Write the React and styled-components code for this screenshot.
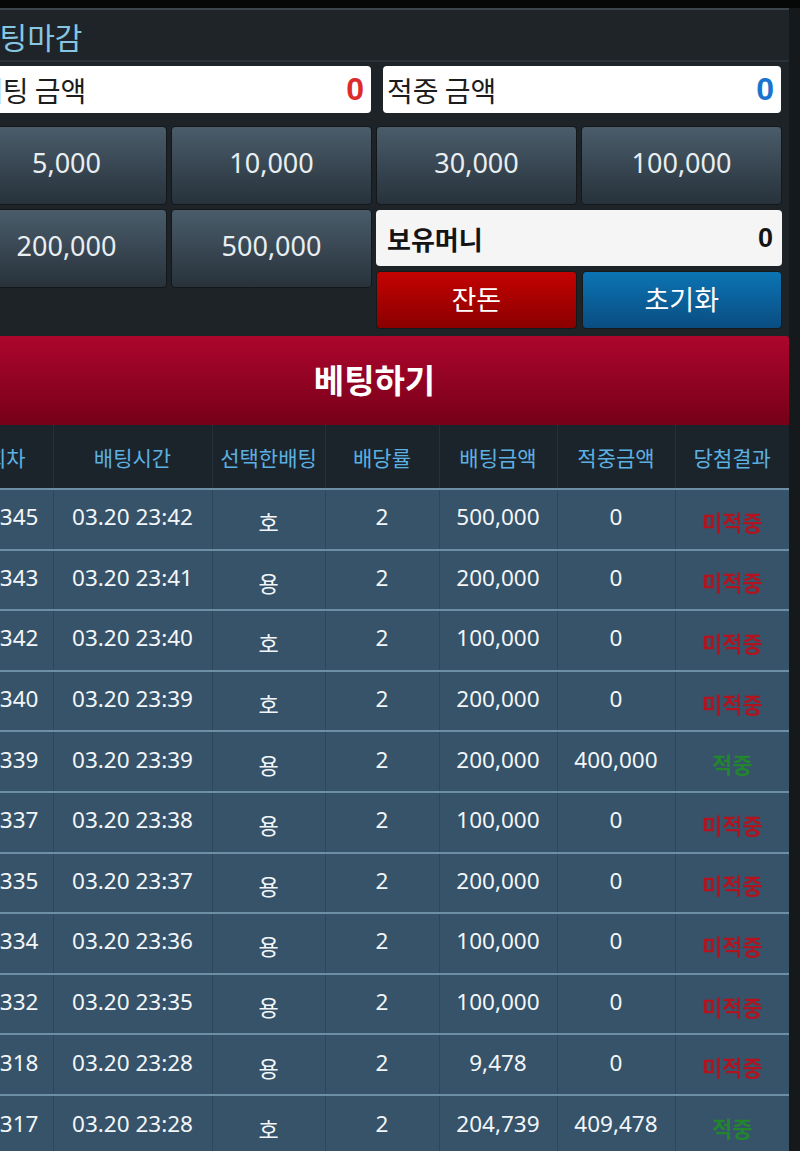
import React from "react";
import styled, { createGlobalStyle } from "styled-components";

const GlobalStyle = createGlobalStyle`
  html, body {
    margin: 0;
    padding: 0;
    background: #15191b;
    overflow: hidden;
  }
  body {
    font-family: "Noto Sans", "Noto Sans CJK KR", sans-serif;
  }
`;

const Page = styled.div`
  width: 800px;
  height: 1151px;
  overflow: hidden;
  background: #15191b;
`;

const TopBar = styled.div`
  height: 8px;
  background: #060707;
`;

const Panel = styled.div`
  width: 829px;
  margin-left: -40px;
  background: #1d2327;
  border-top: 2px solid #3a454c;
`;

const TitleBar = styled.div`
  height: 52px;
  display: flex;
  align-items: center;
  padding: 2px 0 0 12px;
  box-sizing: border-box;
  background: #1e2428;
  border-bottom: 2px solid #283137;
  color: #86c6e2;
  font-family: "Noto Sans CJK KR", sans-serif;
  font-size: 30px;
`;

const Controls = styled.div`
  padding: 4px 7px 7px 6px;
`;

const AmountRow = styled.div`
  display: grid;
  grid-template-columns: 1fr 1fr;
  gap: 12px;
  margin: 0 1px 0 7px;
`;

const AmountBox = styled.div`
  height: 47px;
  display: flex;
  align-items: center;
  justify-content: space-between;
  padding: 0 7px 0 4px;
  background: #ffffff;
  border-radius: 4px;
  box-sizing: border-box;
`;

const AmountLabel = styled.span`
  color: #1c1c1c;
  font-family: "Noto Sans CJK KR", sans-serif;
  font-size: 28px;
`;

const AmountValue = styled.span`
  color: ${({ $tone }) => ($tone === "blue" ? "#1874cf" : "#dc2b2b")};
  font-family: "Liberation Sans", sans-serif;
  font-weight: 700;
  font-size: 32px;
`;

const ChipGrid = styled.div`
  display: grid;
  grid-template-columns: repeat(4, 201px);
  grid-template-rows: 79px auto;
  gap: 4px;
  margin-top: 13px;
`;

const Chip = styled.button`
  height: 79px;
  align-self: start;
  border: 1px solid #13181b;
  border-radius: 4px;
  background: linear-gradient(to bottom, #4a5c6a, #27323b);
  color: #e9eef1;
  font-family: "Noto Sans", sans-serif;
  font-size: 27px;
  padding: 0 0 7px;
`;

const WalletStack = styled.div`
  grid-column: 3 / span 2;
  display: flex;
  flex-direction: column;
  gap: 5px;
  padding-top: 1px;
`;

const WalletBox = styled.div`
  height: 56px;
  display: flex;
  align-items: center;
  justify-content: space-between;
  padding: 0 9px 0 11px;
  background: #f5f5f5;
  border-radius: 4px;
  box-sizing: border-box;
  font-weight: 700;
  color: #141414;
`;

const WalletLabel = styled.span`
  font-family: "Noto Sans CJK KR", sans-serif;
  font-size: 26px;
`;

const WalletValue = styled.span`
  font-family: "Liberation Sans", sans-serif;
  font-size: 27px;
`;

const ActionRow = styled.div`
  display: grid;
  grid-template-columns: 1fr 1fr;
  gap: 5px;
`;

const ActionButton = styled.button`
  height: 58px;
  border: 1px solid #14191c;
  border-radius: 4px;
  background: ${({ $tone }) =>
    $tone === "blue"
      ? "linear-gradient(to bottom, #0b74b3, #0a4d82)"
      : "linear-gradient(to bottom, #c40202, #8a0000)"};
  color: #ffffff;
  font-family: "Noto Sans CJK KR", sans-serif;
  font-size: 27px;
  padding: 0 0 3px;
`;

const BetButton = styled.button`
  display: block;
  width: 100%;
  height: 89px;
  border: none;
  border-radius: 3px 3px 0 0;
  background: linear-gradient(to bottom, #ad062d, #760019);
  color: #ffffff;
  font-family: "Noto Sans CJK KR", sans-serif;
  font-weight: 700;
  font-size: 33px;
  padding: 0 0 4px;
`;

const Table = styled.table`
  width: 829px;
  border-collapse: collapse;
  table-layout: fixed;
`;

const HeadCell = styled.th`
  height: 63px;
  padding: 0;
  background: #1b242b;
  border-left: 1px solid #25313a;
  color: #5cb0e2;
  font-family: "Noto Sans CJK KR", sans-serif;
  font-weight: 400;
  font-size: 21px;
  text-align: center;
  &:first-child {
    border-left: none;
  }
`;

const Row = styled.tr`
  height: 60.6px;
  background: #36536a;
  border-top: 2px solid #6c8fa5;
`;

const Cell = styled.td`
  padding: 0 0 5px;
  border-left: 1px solid #2c475a;
  color: #f3f6f8;
  font-size: 22.5px;
  text-align: center;
  white-space: nowrap;
  &:first-child {
    border-left: none;
  }
`;

const PickCell = styled(Cell)`
  padding: 4px 0 0;
  font-family: "Noto Sans CJK KR", sans-serif;
  font-size: 22px;
`;

const ResultCell = styled(Cell)`
  padding: 4px 0 0;
`;

const Result = styled.span`
  color: ${({ $win }) => ($win ? "#23862f" : "#b2141f")};
  font-family: "Noto Sans CJK KR", sans-serif;
  font-weight: 700;
  font-size: 22px;
  filter: blur(0.4px);
`;

const widths = [93, 159, 113, 114, 118, 118, 114];
const heads = ["회차", "배팅시간", "선택한배팅", "배당률", "배팅금액", "적중금액", "당첨결과"];

const rows = [
  ["20345", "03.20 23:42", "호", "2", "500,000", "0", false],
  ["20343", "03.20 23:41", "용", "2", "200,000", "0", false],
  ["20342", "03.20 23:40", "호", "2", "100,000", "0", false],
  ["20340", "03.20 23:39", "호", "2", "200,000", "0", false],
  ["20339", "03.20 23:39", "용", "2", "200,000", "400,000", true],
  ["20337", "03.20 23:38", "용", "2", "100,000", "0", false],
  ["20335", "03.20 23:37", "용", "2", "200,000", "0", false],
  ["20334", "03.20 23:36", "용", "2", "100,000", "0", false],
  ["20332", "03.20 23:35", "용", "2", "100,000", "0", false],
  ["20318", "03.20 23:28", "용", "2", "9,478", "0", false],
  ["20317", "03.20 23:28", "호", "2", "204,739", "409,478", true],
];

export default function App() {
  return (
    <Page>
      <GlobalStyle />
      <TopBar />
      <Panel>
        <TitleBar>베팅마감</TitleBar>
        <Controls>
          <AmountRow>
            <AmountBox>
              <AmountLabel>베팅 금액</AmountLabel>
              <AmountValue>0</AmountValue>
            </AmountBox>
            <AmountBox>
              <AmountLabel>적중 금액</AmountLabel>
              <AmountValue $tone="blue">0</AmountValue>
            </AmountBox>
          </AmountRow>
          <ChipGrid>
            <Chip>5,000</Chip>
            <Chip>10,000</Chip>
            <Chip>30,000</Chip>
            <Chip>100,000</Chip>
            <Chip>200,000</Chip>
            <Chip>500,000</Chip>
            <WalletStack>
              <WalletBox>
                <WalletLabel>보유머니</WalletLabel>
                <WalletValue>0</WalletValue>
              </WalletBox>
              <ActionRow>
                <ActionButton>잔돈</ActionButton>
                <ActionButton $tone="blue">초기화</ActionButton>
              </ActionRow>
            </WalletStack>
          </ChipGrid>
        </Controls>
        <BetButton>베팅하기</BetButton>
        <Table>
          <colgroup>
            {widths.map((w, i) => (
              <col key={i} style={{ width: w }} />
            ))}
          </colgroup>
          <thead>
            <tr>
              {heads.map((h) => (
                <HeadCell key={h}>{h}</HeadCell>
              ))}
            </tr>
          </thead>
          <tbody>
            {rows.map((r, i) => (
              <Row key={i}>
                <Cell>{r[0]}</Cell>
                <Cell>{r[1]}</Cell>
                <PickCell>{r[2]}</PickCell>
                <Cell>{r[3]}</Cell>
                <Cell>{r[4]}</Cell>
                <Cell>{r[5]}</Cell>
                <ResultCell>
                  <Result $win={r[6]}>{r[6] ? "적중" : "미적중"}</Result>
                </ResultCell>
              </Row>
            ))}
          </tbody>
        </Table>
      </Panel>
    </Page>
  );
}
